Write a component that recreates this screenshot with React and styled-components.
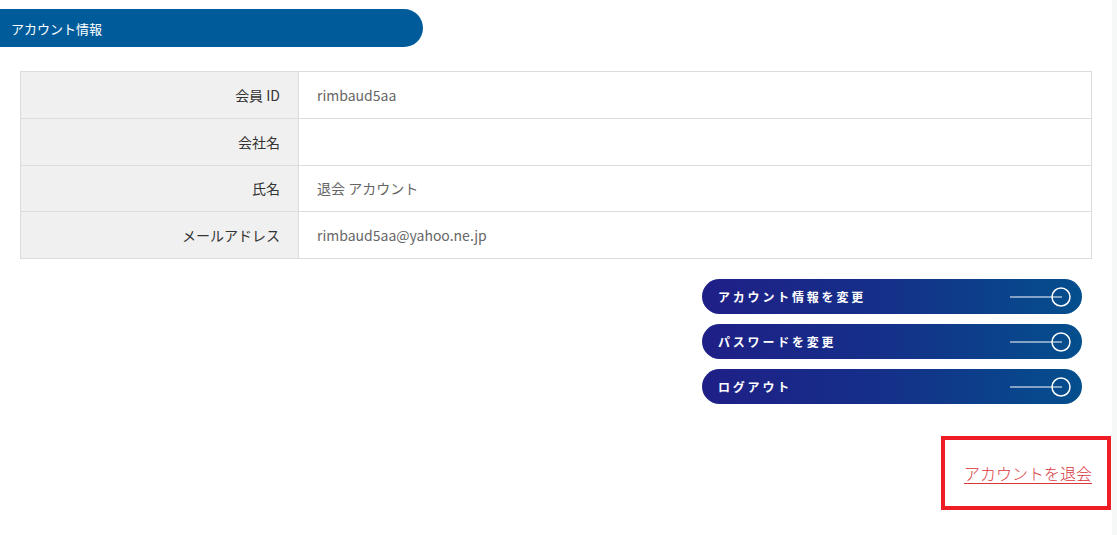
import React from 'react';
import styled, { createGlobalStyle } from 'styled-components';

const GlobalStyle = createGlobalStyle`
  html, body {
    margin: 0;
    padding: 0;
    background: #fff;
    font-family: 'Noto Sans CJK JP', 'Noto Sans', sans-serif;
  }
`;

const Page = styled.div`
  display: flex;
  width: 1117px;
  height: 535px;
  overflow: hidden;
`;

const Main = styled.main`
  flex: 1;
  padding: 9px 0 0 0;
`;

const SideEdge = styled.div`
  width: 5px;
  background: #f6f7f7;
`;

const SectionTitle = styled.h2`
  margin: 0;
  width: 423px;
  height: 38px;
  box-sizing: border-box;
  padding-left: 11px;
  display: flex;
  align-items: center;
  background: #005b9b;
  color: #fff;
  font-size: 13px;
  font-weight: 400;
  border-radius: 0 19px 19px 0;
`;

const Body = styled.div`
  padding: 24px 20px 0 20px;
  display: flex;
  flex-direction: column;
`;

const InfoTable = styled.table`
  width: 1072px;
  border-collapse: collapse;
  font-size: 14px;
`;

const Row = styled.tr`
  height: 46.75px;
`;

const Label = styled.th`
  width: 278px;
  box-sizing: border-box;
  padding: 0 18px 0 0;
  text-align: right;
  font-weight: 400;
  color: #333;
  background: #f0f0f0;
  border: 1px solid #dcdcdc;
`;

const Value = styled.td`
  padding: 0 18px;
  color: #666;
  border: 1px solid #dcdcdc;
`;

const Actions = styled.div`
  display: flex;
  flex-direction: column;
  align-items: flex-end;
  gap: 10px;
  margin-top: 20px;
  padding-right: 10px;
`;

const ActionButton = styled.button`
  width: 380px;
  height: 35px;
  border: none;
  border-radius: 18px;
  padding: 0 10px 0 16px;
  display: flex;
  align-items: center;
  justify-content: space-between;
  background: linear-gradient(90deg, #1f1f87 0%, #143189 50%, #044f8d 100%);
  color: #fff;
  font-family: inherit;
  font-size: 12px;
  font-weight: 700;
  letter-spacing: 2.8px;
  cursor: pointer;
`;

const WithdrawBox = styled.div`
  align-self: flex-end;
  margin-top: 32px;
  margin-right: -19px;
  width: 170px;
  height: 74px;
  box-sizing: border-box;
  border: 4px solid #ee1c25;
  display: flex;
  align-items: center;
  justify-content: flex-end;
  padding-right: 15px;
`;

const WithdrawLink = styled.a`
  color: #d8363c;
  font-size: 16px;
  font-weight: 300;
  text-decoration: underline;
  text-underline-offset: 3px;
  cursor: pointer;
`;

const ArrowIcon = () => (
  <svg width="62" height="22" viewBox="0 0 62 22" fill="none">
    <line x1="0" y1="11" x2="52" y2="11" stroke="#fff" strokeWidth="1.2" />
    <circle cx="51" cy="11" r="9" stroke="#fff" strokeWidth="1.5" />
  </svg>
);

const rows = [
  ['会員 ID', 'rimbaud5aa'],
  ['会社名', ''],
  ['氏名', '退会 アカウント'],
  ['メールアドレス', 'rimbaud5aa@yahoo.ne.jp'],
];

const actions = ['アカウント情報を変更', 'パスワードを変更', 'ログアウト'];

export default function App() {
  return (
    <Page>
      <GlobalStyle />
      <Main>
        <SectionTitle>アカウント情報</SectionTitle>
        <Body>
          <InfoTable>
            <tbody>
              {rows.map(([k, v]) => (
                <Row key={k}>
                  <Label>{k}</Label>
                  <Value>{v}</Value>
                </Row>
              ))}
            </tbody>
          </InfoTable>
          <Actions>
            {actions.map((a) => (
              <ActionButton key={a}>
                <span>{a}</span>
                <ArrowIcon />
              </ActionButton>
            ))}
          </Actions>
          <WithdrawBox>
            <WithdrawLink>アカウントを退会</WithdrawLink>
          </WithdrawBox>
        </Body>
      </Main>
      <SideEdge />
    </Page>
  );
}
